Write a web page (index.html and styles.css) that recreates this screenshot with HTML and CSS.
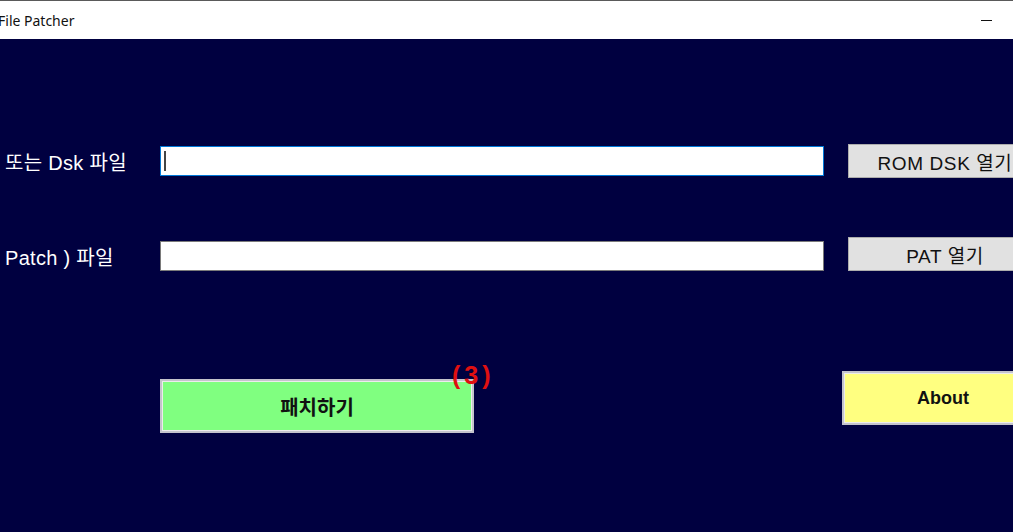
FILE: index.html
```html
<!DOCTYPE html>
<html lang="ko">
<head>
    <meta charset="UTF-8">
    <title>File Patcher</title>
    <link rel="stylesheet" href="styles.css">
</head>
<body>
    <div class="window">
        <!-- barra de titulo -->
        <div class="titlebar">
            <span class="title">File Patcher</span>
            <span class="minimize"></span>
        </div>

        <div class="client">
            <div class="row row-rom">
                <label class="field-label">또는 Dsk 파일</label>
                <div class="field focused"><span class="caret"></span></div>
                <button class="btn-gray">ROM DSK 열기</button>
            </div>

            <div class="row row-pat">
                <label class="field-label">Patch ) 파일</label>
                <div class="field"></div>
                <button class="btn-gray">PAT 열기</button>
            </div>

            <div class="actions">
                <div class="patch-wrap">
                    <button class="btn-patch">패치하기</button>
                    <span class="badge">(3)</span>
                </div>
                <button class="btn-about">About</button>
            </div>
        </div>
    </div>
</body>
</html>
```

FILE: styles.css
```css
/* Ventana principal */
body {
    margin: 0;
    padding: 0;
    overflow: hidden;
    background-color: #000040;
    font-family: "Liberation Sans", "Noto Sans CJK KR", sans-serif;
}

.window {
    width: 1060px;
    height: 532px;
    display: flex;
    flex-direction: column;
}

.titlebar {
    height: 38px;
    border-top: 1px solid #5a5a5a;
    background-color: #fff;
    display: flex;
    align-items: center;
    justify-content: space-between;
}

.title {
    margin-left: -2px;
    font-family: "Noto Sans", sans-serif;
    font-size: 14px;
    color: #111;
}

.minimize {
    width: 11px;
    height: 1px;
    background-color: #111;
    margin-right: 68px; /* el boton sigue fuera de la pantalla */
}

.client {
    flex: 1;
    background-color: #000040;
}

.row {
    display: grid;
    grid-template-columns: 160px 664px 218px;
    align-items: center;
    height: 34px;
}

.row-rom {
    margin-top: 105px;
}

.row-pat {
    margin-top: 59px;
}

.row-pat .field {
    margin-top: 4px;
}

.row-pat .field-label {
    margin-top: 5px;
}

.field-label {
    padding-left: 5px;
    color: #fff;
    font-size: 20px;
    letter-spacing: 0.3px;
    white-space: nowrap;
}

.field {
    height: 28px;
    background-color: #fff;
    border: 1px solid #7a7a7a;
    display: flex;
    align-items: center;
}

.field.focused {
    border-color: #0078d7;
}

.caret {
    width: 2px;
    height: 20px;
    margin-left: 3px;
    background-color: #444;
}

button {
    font-family: "Liberation Sans", "Noto Sans CJK KR", sans-serif;
    cursor: pointer;
    padding: 0;
}

.btn-gray {
    margin-left: 24px;
    height: 34px;
    background-color: #e1e1e1;
    border: 1px solid #adadad;
    font-size: 19px;
    letter-spacing: 0.6px;
    white-space: nowrap;
    color: #111;
}

.actions {
    margin-top: 100px;
    display: flex;
    align-items: flex-start;
}

.patch-wrap {
    position: relative;
    margin-left: 160px;
    margin-top: 8px;
}

.btn-patch {
    width: 314px;
    height: 54px;
    background-color: #80ff80;
    border: 2px solid #c4c4cc;
    box-shadow: inset 0 0 0 1px #ececec;
    font-size: 20px;
    font-weight: bold;
    color: #111;
}

/* contador encima del boton */
.badge {
    position: absolute;
    left: 292px;
    top: -18px;
    color: #e01010;
    font-size: 25px;
    font-weight: bold;
    letter-spacing: 4px;
}

.btn-about {
    margin-left: 368px;
    width: 202px;
    height: 54px;
    background-color: #ffff80;
    border: 2px solid #c4c4cc;
    box-shadow: inset 0 0 0 1px #ececec;
    font-size: 18px;
    font-weight: bold;
    color: #111;
}
```
